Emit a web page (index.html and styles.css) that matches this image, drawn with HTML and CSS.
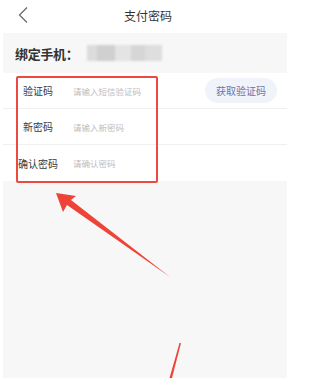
FILE: index.html
```html
<!DOCTYPE html>
<html lang="zh">
<head>
<meta charset="utf-8">
<link rel="stylesheet" href="styles.css">
</head>
<body>
<div class="page">
  <header class="topbar">
    <svg class="back" width="12" height="18" viewBox="0 0 12 18"><path d="M10 1.5 L2.5 9 L10 16.5" fill="none" stroke="#666" stroke-width="1.2"/></svg>
    <div class="title">支付密码</div>
  </header>
  <main class="main">
    <div class="bind">
      <span class="bind-label">绑定手机：</span>
      <span class="blur">
        <i class="b1"></i><i class="b2"></i><i class="b3"></i><i class="b4"></i><i class="b5"></i>
      </span>
    </div>
    <div class="form">
      <div class="row">
        <span class="label">验证码</span>
        <span class="ph">请输入短信验证码</span>
        <span class="code-btn">获取验证码</span>
      </div>
      <div class="row">
        <span class="label">新密码</span>
        <span class="ph">请输入新密码</span>
      </div>
      <div class="row last">
        <span class="label">确认密码</span>
        <span class="ph">请确认密码</span>
      </div>
    </div>
    <div class="rest"></div>
  </main>
  <div class="redbox"></div>
  <svg class="arrows" width="296" height="378" viewBox="0 0 296 378">
    <polygon points="56,193 76,196 71,200 170,277 67,205 63,212" fill="#ee4438"/>
    <polygon points="179.5,343 181,343 172,378 169.5,378" fill="#ee4438"/>
  </svg>
</div>
</body>
</html>
```
FILE: styles.css
```css
html, body {
  margin: 0;
  padding: 0;
  background: #ffffff;
}
body {
  font-family: "Noto Sans CJK SC", "Noto Sans", sans-serif;
  color: #333;
}
.page {
  position: relative;
  width: 296px;
  height: 378px;
  overflow: hidden;
}
.topbar {
  height: 33px;
  display: flex;
  align-items: center;
  justify-content: center;
  position: relative;
}
.back {
  position: absolute;
  left: 17px;
  top: 6px;
}
.title {
  font-size: 12px;
  color: #333;
  margin-top: -3px;
}
.main {
  margin-left: 3px;
  width: 284px;
  display: flex;
  flex-direction: column;
  height: 345px;
}
.bind {
  height: 40px;
  background: #f7f7f7;
  display: flex;
  align-items: center;
  padding-left: 12px;
}
.bind-label {
  font-size: 13px;
  font-weight: bold;
  color: #333;
  letter-spacing: -0.3px;
}
.blur {
  display: flex;
  height: 16px;
  margin-left: 8px;
  filter: blur(1px);
}
.blur i {
  display: block;
  height: 16px;
}
.b1 { width: 10px; background: #dcdcdc; }
.b2 { width: 18px; background: #d0d0d0; }
.b3 { width: 16px; background: #e4e4e4; }
.b4 { width: 14px; background: #d6d6d6; }
.b5 { width: 17px; background: #dedede; }
.form {
  background: #fff;
}
.row {
  height: 36px;
  display: flex;
  align-items: center;
  border-bottom: 1px solid #f0f0f0;
  box-sizing: border-box;
}
.row.last {
  border-bottom: none;
}
.label {
  width: 70px;
  text-align: center;
  font-size: 10px;
  color: #3a3a3a;
}
.ph {
  font-size: 8.5px;
  color: #bdbdbd;
  flex: 1;
}
.code-btn {
  width: 72px;
  height: 25px;
  border-radius: 13px;
  background: #f1f3fa;
  color: #6a75a8;
  font-size: 10px;
  display: flex;
  align-items: center;
  justify-content: center;
  margin-right: 10px;
}
.rest {
  flex: 1;
  background: #f7f7f7;
}
.redbox {
  position: absolute;
  left: 16px;
  top: 76px;
  width: 138px;
  height: 103px;
  border: 2px solid #ec4a40;
  border-radius: 2px;
}
.arrows {
  position: absolute;
  left: 0;
  top: 0;
}
```
